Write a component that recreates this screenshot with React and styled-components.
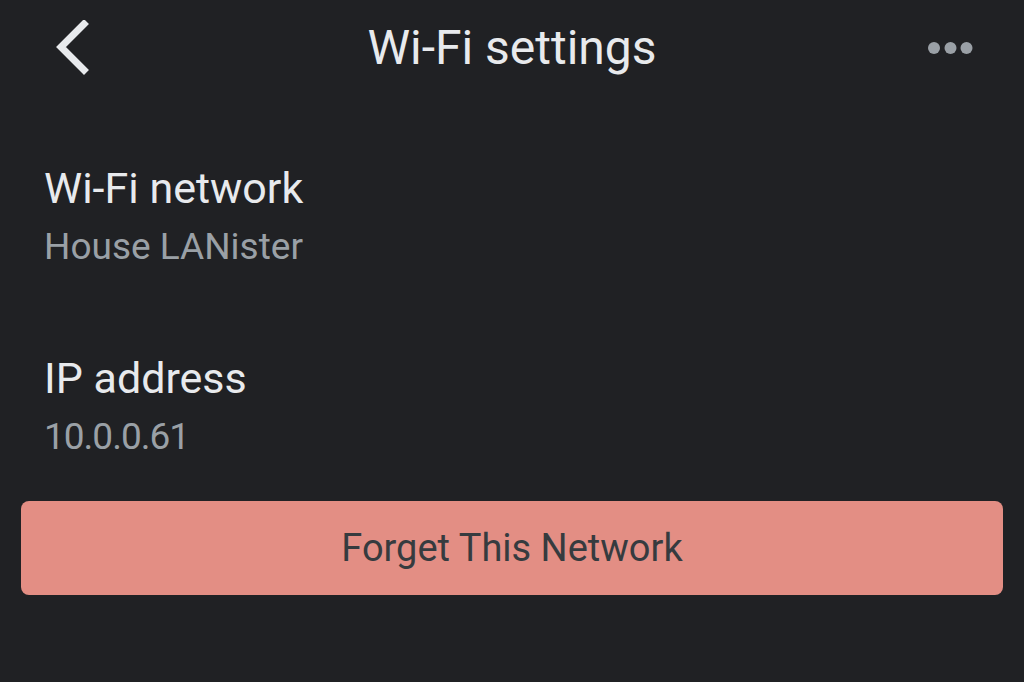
import React from "react";
import styled, { createGlobalStyle } from "styled-components";

const Global = createGlobalStyle`
  html, body { margin: 0; padding: 0; background: #202124; }
  body { font-family: Roboto, "Noto Sans", sans-serif; -webkit-font-smoothing: antialiased; }
  * { box-sizing: border-box; }
`;

const Page = styled.div`
  width: 1024px;
  height: 682px;
  background: #202124;
  display: flex;
  flex-direction: column;
  overflow: hidden;
`;

const Header = styled.header`
  height: 96px;
  display: grid;
  grid-template-columns: 120px 1fr 120px;
  align-items: center;
`;

const IconButton = styled.button`
  background: none;
  border: 0;
  padding: 0;
  display: flex;
  align-items: center;
  justify-content: ${(p) => p.$align || "flex-start"};
  height: 96px;
  padding-left: ${(p) => p.$pl || 0}px;
  padding-right: ${(p) => p.$pr || 0}px;
  cursor: pointer;
`;

const Title = styled.h1`
  margin: 0;
  text-align: center;
  color: #e8eaed;
  font-weight: 400;
  font-size: 48px;
  line-height: 56px;
`;

const Content = styled.main`
  display: flex;
  flex-direction: column;
  padding: 0 21px;
`;

const Item = styled.section`
  padding-left: 23px;
  display: flex;
  flex-direction: column;
  margin-top: ${(p) => p.$mt}px;
`;

const Label = styled.div`
  color: #e8eaed;
  font-size: 43px;
  line-height: 46px;
`;

const Value = styled.div`
  color: #9aa0a6;
  font-size: 37px;
  line-height: 44px;
  margin-top: 14px;
  letter-spacing: ${(p) => p.$ls || 0}px;
`;

const DangerButton = styled.button`
  margin-top: 42px;
  height: 94px;
  width: 100%;
  border: 0;
  border-radius: 8px;
  background: #e38e84;
  color: #363b3f;
  font-family: Roboto, "Noto Sans", sans-serif;
  font-size: 38px;
  font-weight: 400;
  cursor: pointer;
`;

const Dots = () => (
  <svg width="50" height="14" viewBox="0 0 50 14">
    <circle cx="7" cy="7" r="6" fill="#9aa0a6" />
    <circle cx="23.5" cy="7" r="6" fill="#9aa0a6" />
    <circle cx="39.5" cy="7" r="6" fill="#9aa0a6" />
  </svg>
);

const Back = () => (
  <svg width="40" height="56" viewBox="0 0 40 56">
    <path d="M32 4 L9 27 L32 50" fill="none" stroke="#e8eaed" strokeWidth="7" strokeLinecap="square" />
  </svg>
);

export default function App() {
  return (
    <Page>
      <Global />
      <Header>
        <IconButton $pl={52} aria-label="Back">
          <Back />
        </IconButton>
        <Title>Wi-Fi settings</Title>
        <IconButton $align="flex-end" $pr={47} aria-label="More">
          <Dots />
        </IconButton>
      </Header>
      <Content>
        <Item $mt={69}>
          <Label>Wi-Fi network</Label>
          <Value>House LANister</Value>
        </Item>
        <Item $mt={86}>
          <Label>IP address</Label>
          <Value $ls={-1}>10.0.0.61</Value>
        </Item>
        <DangerButton>Forget This Network</DangerButton>
      </Content>
    </Page>
  );
}
